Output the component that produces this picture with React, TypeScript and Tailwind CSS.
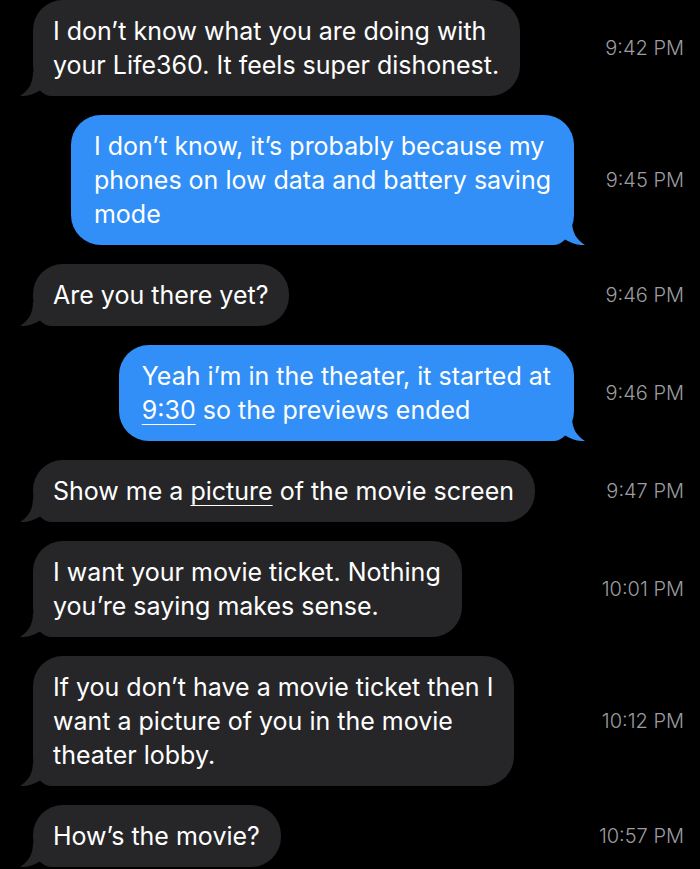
import type { ReactNode } from "react";

const GRAY = "#262628";
const BLUE = "#318ff7";

function Tail({ side }: { side: "in" | "out" }) {
  return (
    <svg
      width="44"
      height="24"
      viewBox="0 0 44 24"
      className={side === "in" ? "absolute -left-[13px] bottom-0" : "absolute -right-[11px] bottom-0 -scale-x-100"}>
      <path
        d="M13 0 C13 12 8 19 0 24 C7 24.5 14 22 20 18.5 C23 22 27 24 32 24 L44 24 L44 0 Z"
        fill={side === "in" ? GRAY : BLUE}
      />
    </svg>
  );
}

function Row({ side, time, children }: { side: "in" | "out"; time: string; children: ReactNode }) {
  return (
    <div className="flex items-center">
      <div className={side === "in" ? "flex flex-1 justify-start pl-[33px]" : "flex flex-1 justify-end pr-[10px]"}>
        <div
          className={
            side === "in"
              ? "relative rounded-[30px] bg-[#262628] pl-[20px] pr-[21px] py-[14px] whitespace-nowrap text-[25px] leading-[34px] text-white"
              : "relative rounded-[30px] bg-[#318ff7] pl-[23px] pr-[23px] py-[14px] whitespace-nowrap text-[25px] leading-[34px] text-white"
          }>
          <Tail side={side} />
          <span className="relative">{children}</span>
        </div>
      </div>
      <div className="w-[116px] shrink-0 whitespace-nowrap pr-[16px] text-right text-[20px] font-light text-[#9c9ca1]">
        {time}
      </div>
    </div>
  );
}

export default function App() {
  return (
    <div
      className="min-h-[869px] w-[700px] bg-black flex flex-col gap-[19px] overflow-hidden"
      style={{ fontFamily: "Inter, 'Liberation Sans', sans-serif" }}>
      <Row side="in" time="9:42 PM">
        I don’t know what you are doing with
        <br />
        your Life360. It feels super dishonest.
      </Row>
      <Row side="out" time="9:45 PM">
        I don’t know, it’s probably because my
        <br />
        phones on low data and battery saving
        <br />
        mode
      </Row>
      <Row side="in" time="9:46 PM">
        Are you there yet?
      </Row>
      <Row side="out" time="9:46 PM">
        Yeah i’m in the theater, it started at
        <br />
        <span className="underline decoration-1 underline-offset-[5px]">9:30</span> so the previews ended
      </Row>
      <Row side="in" time="9:47 PM">
        Show me a <span className="underline decoration-1 underline-offset-[5px]">picture</span> of the movie screen
      </Row>
      <Row side="in" time="10:01 PM">
        I want your movie ticket. Nothing
        <br />
        you’re saying makes sense.
      </Row>
      <Row side="in" time="10:12 PM">
        If you don’t have a movie ticket then I
        <br />
        want a picture of you in the movie
        <br />
        theater lobby.
      </Row>
      <Row side="in" time="10:57 PM">
        How’s the movie?
      </Row>
    </div>
  );
}
